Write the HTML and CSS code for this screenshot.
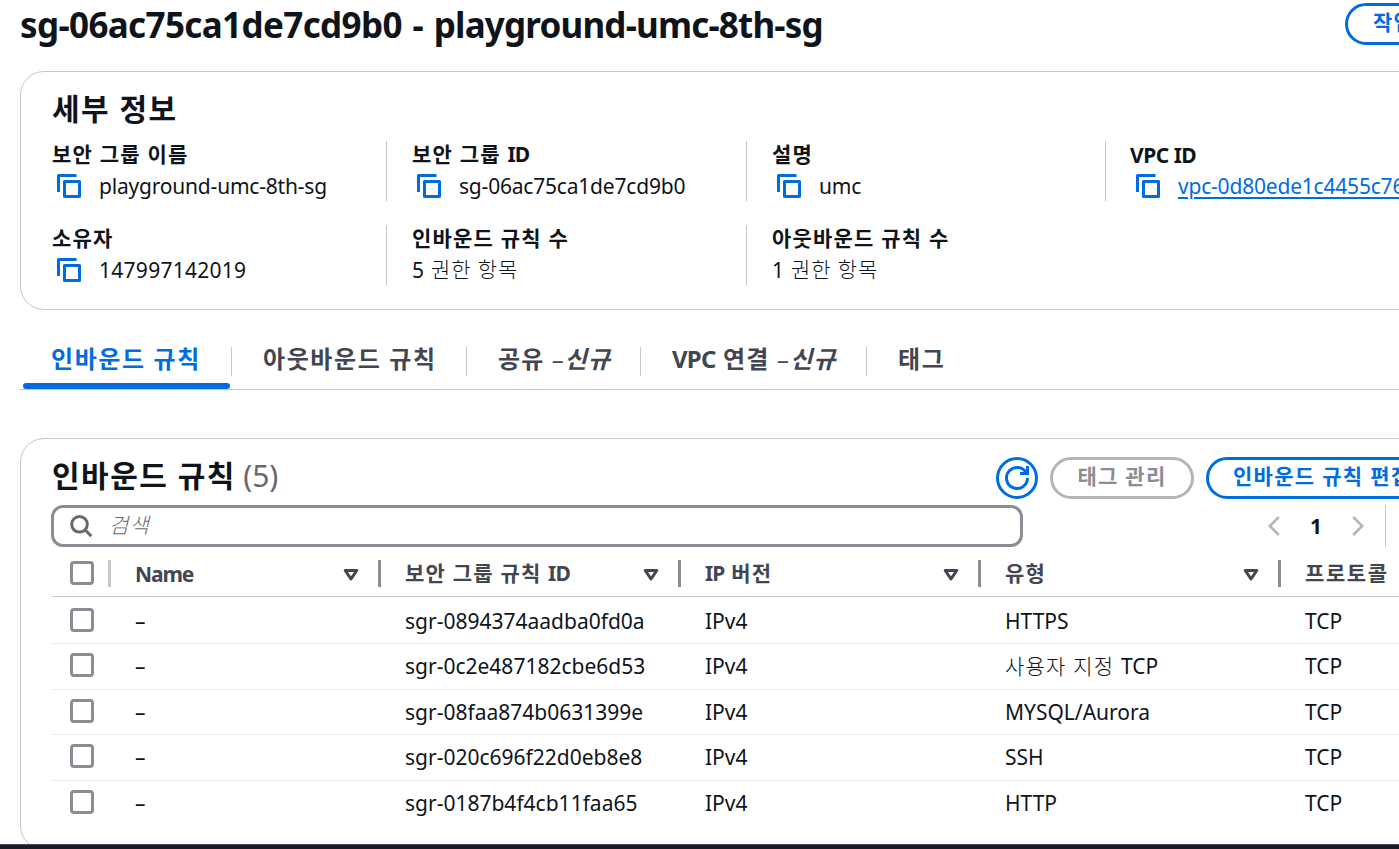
FILE: index.html
```html
<!DOCTYPE html>
<html lang="ko">
<head>
<meta charset="utf-8">
<title>sg-06ac75ca1de7cd9b0 - playground-umc-8th-sg</title>
<link rel="stylesheet" href="styles.css">
</head>
<body>
<svg class="defs" width="0" height="0">
  <symbol id="copy" viewBox="0 0 24 24"><path d="M1.5 18V1.5H19.5M7.5 7.5h15v15h-15z" fill="none" stroke="currentColor" stroke-width="3" stroke-linejoin="round"/></symbol>
  <symbol id="caret" viewBox="0 0 16 14"><path d="M2.2 2.5h11.6L8 11z" fill="none" stroke="currentColor" stroke-width="3" stroke-linejoin="round"/></symbol>
</svg>
<main class="page">
  <header class="page-header">
    <h1 class="page-title"><span class="sg-id">sg-06ac75ca1de7cd9b0</span> - playground-umc-8th-sg</h1>
    <button class="btn">작업</button>
  </header>

  <section class="panel details">
    <h2 class="panel-title">세부 정보</h2>
    <dl class="facts">
      <div class="fact"><dt class="ko">보안 그룹 이름</dt><dd><svg class="copy"><use href="#copy"/></svg><span class="tight">playground-umc-8th-sg</span></dd></div>
      <div class="fact"><dt class="ko">보안 그룹 <span class="latin">ID</span></dt><dd><svg class="copy"><use href="#copy"/></svg><span class="tight">sg-06ac75ca1de7cd9b0</span></dd></div>
      <div class="fact"><dt class="ko">설명</dt><dd><svg class="copy"><use href="#copy"/></svg><span class="tight">umc</span></dd></div>
      <div class="fact"><dt class="vpc">VPC ID</dt><dd><svg class="copy"><use href="#copy"/></svg><a class="link">vpc-0d80ede1c4455c76f</a></dd></div>
      <div class="fact"><dt class="ko">소유자</dt><dd><svg class="copy"><use href="#copy"/></svg><span class="owner">147997142019</span></dd></div>
      <div class="fact"><dt class="ko">인바운드 규칙 수</dt><dd class="amount">5&nbsp;<span class="ko-light">권한 항목</span></dd></div>
      <div class="fact"><dt class="ko">아웃바운드 규칙 수</dt><dd class="amount">1&nbsp;<span class="ko-light">권한 항목</span></dd></div>
    </dl>
  </section>

  <nav class="tabs">
    <a class="tab active w1">인바운드 규칙</a>
    <a class="tab w2">아웃바운드 규칙</a>
    <a class="tab w3">공유 <span class="dash">–</span><em>신규</em></a>
    <a class="tab w4"><span class="latin">VPC</span> 연결 <span class="dash">–</span><em>신규</em></a>
    <a class="tab w5">태그</a>
  </nav>

  <section class="panel rules">
    <div class="rules-header">
      <h2 class="panel-title">인바운드 규칙 <span class="count">(5)</span></h2>
      <button class="btn round" aria-label="refresh"><svg width="24" height="24" viewBox="0 0 16 16" fill="none" stroke="currentColor" stroke-width="2"><path d="M10 5h5V0"/><path d="M15 8a7 7 0 1 1-.7-3.07"/></svg></button>
      <button class="btn disabled">태그 관리</button>
      <button class="btn edit">인바운드 규칙 편집</button>
    </div>
    <div class="tools">
      <div class="search">
        <svg width="24" height="24" viewBox="0 0 24 24" fill="none" stroke="currentColor" stroke-width="3"><circle cx="10.5" cy="10.3" r="7.8"/><path d="M16 15.8l6.3 6.3"/></svg>
        <span class="placeholder">검색</span>
      </div>
      <div class="pager">
        <svg width="12" height="20" viewBox="0 0 12 20" fill="none" stroke="currentColor" stroke-width="2.6"><path d="M10.8 1L1.8 10l9 9"/></svg>
        <b>1</b>
        <svg width="12" height="20" viewBox="0 0 12 20" fill="none" stroke="currentColor" stroke-width="2.6"><path d="M1.2 1l9 9-9 9"/></svg>
      </div>
    </div>
    <div class="table">
      <div class="row head">
        <span class="cell check"><i class="box"></i><i class="sep light"></i></span>
        <span class="cell"><span class="label name">Name</span><svg class="caret"><use href="#caret"/></svg><i class="sep"></i></span>
        <span class="cell"><span class="label ko">보안 그룹 규칙 <span class="latin">ID</span></span><svg class="caret"><use href="#caret"/></svg><i class="sep"></i></span>
        <span class="cell"><span class="label ko"><span class="latin">IP</span> 버전</span><svg class="caret"><use href="#caret"/></svg><i class="sep"></i></span>
        <span class="cell"><span class="label ko">유형</span><svg class="caret"><use href="#caret"/></svg><i class="sep"></i></span>
        <span class="cell"><span class="label ko protocol">프로토콜</span></span>
      </div>
      <div class="row r1"><span class="cell check"><i class="box"></i></span><span class="cell">–</span><span class="cell">sgr-0894374aadba0fd0a</span><span class="cell">IPv4</span><span class="cell">HTTPS</span><span class="cell">TCP</span></div>
      <div class="row r2"><span class="cell check"><i class="box"></i></span><span class="cell">–</span><span class="cell">sgr-0c2e487182cbe6d53</span><span class="cell">IPv4</span><span class="cell"><span class="ko-light custom">사용자 지정&nbsp;</span>TCP</span><span class="cell">TCP</span></div>
      <div class="row r3"><span class="cell check"><i class="box"></i></span><span class="cell">–</span><span class="cell">sgr-08faa874b0631399e</span><span class="cell">IPv4</span><span class="cell">MYSQL/Aurora</span><span class="cell">TCP</span></div>
      <div class="row r2"><span class="cell check"><i class="box"></i></span><span class="cell">–</span><span class="cell">sgr-020c696f22d0eb8e8</span><span class="cell">IPv4</span><span class="cell">SSH</span><span class="cell">TCP</span></div>
      <div class="row final"><span class="cell check"><i class="box"></i></span><span class="cell">–</span><span class="cell">sgr-0187b4f4cb11faa65</span><span class="cell">IPv4</span><span class="cell">HTTP</span><span class="cell">TCP</span></div>
    </div>
  </section>
</main>
<footer class="footer"></footer>
</body>
</html>
```
FILE: styles.css
```css
* { box-sizing: border-box; }
html, body { margin: 0; height: 100%; overflow: hidden; }
body {
  display: flex;
  flex-direction: column;
  background: #fff;
  color: #0f141a;
  font: 21px/30px "Noto Sans", "Noto Sans CJK KR", sans-serif;
  white-space: nowrap;
}
h1, h2, dl, dd { margin: 0; }
.defs { position: absolute; }
.page { flex: 1; min-height: 0; overflow: hidden; padding-left: 20px; }
.footer { flex: none; height: 5px; background: #161d26; border-top: 1px solid #424650; }

.page-header { display: flex; justify-content: space-between; width: 1440px; height: 71px; padding-top: 3px; }
.page-title { font-size: 35px; line-height: 43px; font-weight: 700; letter-spacing: -0.82px; word-spacing: 2.5px; }
.sg-id { letter-spacing: -0.63px; }
.page-header .btn { width: 115px; padding-left: 25px; text-align: left; }

.btn {
  height: 42px;
  padding: 0 24px 4px;
  border: 3px solid #006ce0;
  border-radius: 21px;
  background: #fff;
  color: #006ce0;
  font: 700 21px/30px "Noto Sans", "Noto Sans CJK KR", sans-serif;
  letter-spacing: 1.3px;
  white-space: nowrap;
  flex: none;
}
.btn.round { display: grid; place-items: center; width: 42px; padding: 0; }
.btn.disabled { width: 144px; border-color: #b4b4bb; color: #8c8c94; }

.panel { width: 1480px; border: 1px solid #c6c6cd; border-radius: 24px; }
.panel-title { font-size: 30px; line-height: 36px; font-weight: 700; letter-spacing: 1.5px; }
.details { height: 239px; padding: 19px 31px 0; }
.facts { display: grid; grid-template-columns: 334px 360px 359px 360px; row-gap: 24px; margin-top: 14px; }
.fact { height: 60px; padding-left: 25px; border-left: 1px solid #c6c6cd; }
.fact:nth-child(4n+1) { padding-left: 0; border-left: 0; }
dt { font-weight: 700; height: 30px; line-height: 27px; }
dt.vpc { line-height: 28px; margin-left: -1px; letter-spacing: -0.5px; }
dd { display: flex; align-items: center; height: 30px; line-height: 29px; }
dd > span { line-height: 29px; }
dd.amount .ko-light { padding-bottom: 2px; margin-left: 1.5px; }
.ko { letter-spacing: 1.2px; }
.ko-light { font-weight: 300; letter-spacing: 0.9px; }
.custom { letter-spacing: 1.2px; }
.latin { letter-spacing: -0.8px; }
.tight { letter-spacing: -0.2px; }
.owner { letter-spacing: 0.27px; }
.copy { width: 24px; height: 24px; margin: 0 18px 0 5px; color: #006ce0; flex: none; }
.link { color: #006ce0; text-decoration: underline; text-underline-offset: 3px; text-decoration-thickness: 2px; letter-spacing: -0.2px; }

.tabs { display: flex; width: 1480px; height: 80px; padding-top: 24px; border-bottom: 1px solid #c6c6cd; }
.tab { display: block; height: 55px; padding: 10px 0 0 31px; color: #424650; font-size: 24px; font-weight: 700; letter-spacing: 1.6px; background: linear-gradient(#c6c6cd, #c6c6cd) right 13px / 1px 29px no-repeat; }
.tab em { font-style: oblique 14deg; }
.w1 { width: 212px; }
.w2 { width: 235px; }
.w3 { width: 174px; letter-spacing: 1.1px; }
.w4 { width: 226px; letter-spacing: 1.2px; }
.w5 { background: none; }
.dash { font-weight: 400; }
.active { color: #006ce0; display: flex; flex-direction: column; }
.active::after { content: ""; flex: none; width: 207px; height: 6px; margin: 9px 0 0 -28px; border-radius: 3px; background: #006ce0; }

.rules { height: 412px; margin-top: 48px; padding: 18px 30px 0; }
.rules-header { display: flex; gap: 12px; height: 48px; }
.rules-header .panel-title { width: 933px; padding: 1px 0 0 1px; }
.count { margin-left: -2px; font-weight: 400; color: #656871; letter-spacing: 0; }
.tools { display: flex; height: 42px; }
.search { display: flex; align-items: center; width: 972px; border: 3px solid #8c8c94; border-radius: 12px; padding-left: 15px; color: #656871; }
.placeholder { margin: 0 0 2px 16px; font-weight: 300; font-style: oblique 14deg; letter-spacing: 1.2px; }
.pager { display: flex; align-items: center; width: 363px; padding-left: 245px; border-right: 1px solid #c6c6cd; color: #b4b4bb; }
.pager b { width: 53px; padding-left: 11px; margin: 0 0 1px 19px; color: #0f141a; }
.pager svg { flex: none; }

.table { margin-left: 1px; }
.row { display: grid; grid-template-columns: 59px 270px 300px 300px 300px 190px; height: 46px; border-bottom: 1px solid #ebebf0; }
.cell { display: flex; align-items: center; padding: 1px 0 0 24px; }
.check { padding: 0 0 0 18px; }
.head { height: 50px; padding-top: 3px; border-bottom-color: #c6c6cd; color: #424650; font-weight: 700; }
.head .cell { padding-top: 0; }
.r1 { height: 47px; }
.r2 { padding-bottom: 3px; }
.r3 { height: 45px; padding-bottom: 2px; }
.final { height: 45px; padding-bottom: 3px; border: 0; }
.box { width: 24px; height: 24px; border: 3px solid #8c8c94; border-radius: 4px; background: #fff; }
.head .box { margin-bottom: 1px; }
.name { padding-top: 2px; letter-spacing: -1.1px; }
.protocol { letter-spacing: 1.6px; }
.sep { width: 3px; height: 27px; margin-left: 19px; background: #8c8c94; }
.sep.light { margin-left: auto; background: #c6c6cd; }
.caret { width: 16px; height: 14px; margin: 3px 0 0 auto; }
```
